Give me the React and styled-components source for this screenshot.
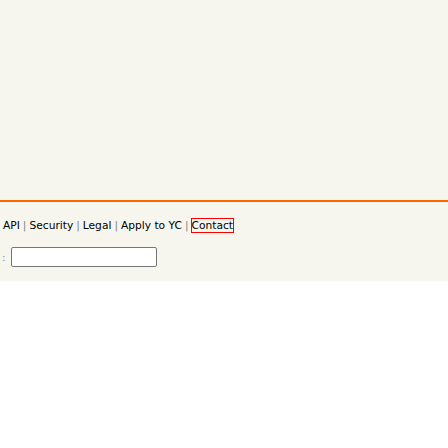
import styled, { createGlobalStyle } from 'styled-components'

const Global = createGlobalStyle`
  html, body {
    margin: 0;
    padding: 0;
    background: #ffffff;
  }
`

const Page = styled.div`
  background: #f6f6ef;
  width: 448px;
  font-family: 'DejaVu Sans', Verdana, sans-serif;
  font-size: 10.67px;
  color: #000;
`

const Spacer = styled.div`
  height: 200px;
`

const Footer = styled.div`
  border-top: 2px solid #ff6600;
  padding: 17px 0 14px 3px;
`

const Links = styled.div`
  line-height: 13px;
  white-space: nowrap;
`

const Link = styled.a`
  color: #000;
  text-decoration: none;
  outline: ${(props) => (props.focused ? '1px solid #ff0000' : 'none')};
`

const Sep = styled.span`
  color: #828282;
  margin: 0 3px;
`

const SearchRow = styled.form`
  display: flex;
  align-items: center;
  gap: 5px;
  margin: 15px 0 0 -1px;
`

const Label = styled.span`
  color: #828282;
  line-height: 13px;
  padding-top: 1px;
`

const SearchInput = styled.input`
  box-sizing: border-box;
  width: 146px;
  height: 20px;
  border: 1px solid #767676;
  border-radius: 2px;
  background: #fff;
  margin: 0;
  padding: 1px 2px;
`

const links = ['API', 'Security', 'Legal', 'Apply to YC', 'Contact']

function App() {
  return (
    <Page>
      <Global />
      <Spacer />
      <Footer>
        <Links>
          {links.map((l, i) => (
            <span key={l}>
              {i > 0 && <Sep>|</Sep>}
              <Link href="#" focused={l === 'Contact'}>{l}</Link>
            </span>
          ))}
        </Links>
        <SearchRow onSubmit={(e) => e.preventDefault()}>
          <Label>:</Label>
          <SearchInput type="text" />
        </SearchRow>
      </Footer>
    </Page>
  )
}

export default App
